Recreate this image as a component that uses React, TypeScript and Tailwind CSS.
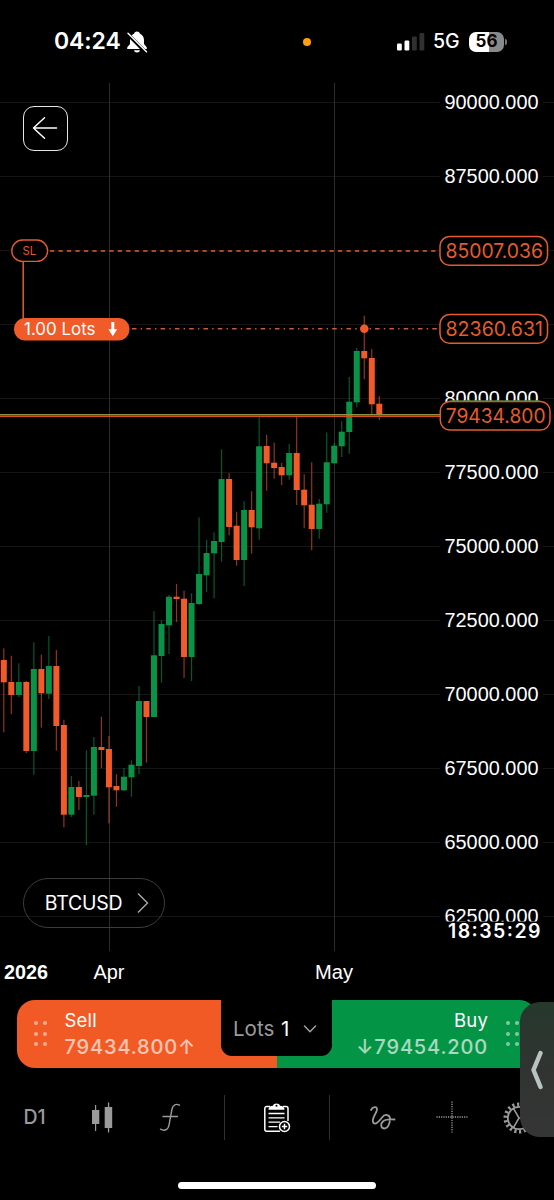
import React from 'react';

type Candle = [dir: 'up' | 'down', high: number, top: number, bottom: number, low: number];

const UP = '#0a9347';
const DOWN = '#f15a29';
const ACCENT = '#e25c2e';

const candles: Candle[] = [
  ['down', 648.3, 660, 682.3, 732.3],
  ['down', 655.7, 682, 695, 714.3],
  ['up', 663.3, 682, 695, 697],
  ['down', 681, 682, 751, 753],
  ['up', 642.3, 669, 751, 774.7],
  ['down', 654.7, 669, 693.3, 727.7],
  ['up', 636, 666, 693.7, 699],
  ['down', 650, 666, 726, 750.7],
  ['down', 719.7, 725, 814.7, 827.3],
  ['up', 776, 787, 814.7, 817],
  ['down', 781, 787, 797, 810],
  ['up', 750.3, 795, 797, 845],
  ['up', 737, 747, 795.7, 814.7],
  ['down', 716.7, 747, 750, 768],
  ['down', 736, 749, 787.3, 823.3],
  ['down', 774.3, 786, 790.3, 806.7],
  ['up', 768, 776.7, 790.3, 791],
  ['up', 760.3, 764.7, 777.3, 796.7],
  ['up', 686, 701, 766, 774.3],
  ['down', 701, 701, 717, 762.7],
  ['up', 611.3, 655.3, 717, 717],
  ['up', 620.3, 624, 656, 682.7],
  ['up', 595, 596.7, 625.3, 654],
  ['down', 584, 596.7, 599, 622],
  ['down', 590.7, 598.7, 657, 678],
  ['up', 593.3, 603, 657, 681],
  ['up', 517.3, 574, 604, 605],
  ['up', 540, 553, 575.3, 592],
  ['up', 532.3, 541, 553.3, 598.3],
  ['up', 449.3, 479, 542, 561.7],
  ['down', 473.3, 479, 527, 535.3],
  ['down', 511.7, 525.7, 560, 565.7],
  ['up', 501.3, 510, 560, 586],
  ['down', 491.3, 510, 527.3, 553.7],
  ['up', 416, 446.3, 528.3, 539.7],
  ['down', 434.7, 446, 463.3, 490.7],
  ['down', 442.7, 462.7, 468, 478.7],
  ['down', 463, 467, 475.3, 485],
  ['up', 444, 453, 475.3, 479.7],
  ['down', 416, 453, 490, 505],
  ['down', 474.3, 489.7, 505.3, 528.3],
  ['down', 462.3, 504.7, 529, 550.3],
  ['up', 499, 503.7, 529, 538.7],
  ['up', 432.3, 462.3, 504.3, 512.7],
  ['up', 442.7, 445.7, 463.3, 463.3],
  ['up', 421.3, 431.7, 446.3, 457],
  ['up', 377, 401.7, 432, 453.7],
  ['up', 348, 351, 402.3, 407.3],
  ['down', 315.7, 351, 358.3, 379.3],
  ['down', 349, 358, 404.3, 415],
  ['down', 396, 403.7, 414.3, 420],
];

const prices = [90000, 87500, 85000, 82500, 80000, 77500, 75000, 72500, 70000, 67500, 65000, 62500];

// these two levels sit under the order price tags
const hiddenPrices = [85000, 82500];

const PriceTag: React.FC<{ x: number; y: number; width: number; label: string }> = ({ x, y, width, label }) => (
  <g>
    <rect x={x} y={y} width={width} height={28.6} rx={9.5} fill="#000" stroke={ACCENT} strokeWidth={1.5} />
    <text x={x + 5.5} y={y + 21.4} textLength={width - 10} lengthAdjust="spacingAndGlyphs" fontSize={20} fill={ACCENT} className="font-['Inter',sans-serif]">
      {label}
    </text>
  </g>
);

const Chart: React.FC = () => (
  <svg width="554" height="917" viewBox="0 83 554 917" className="block">
    {prices.map((price, i) => {
      const y = 102.5 + i * 74;
      return <path key={price} d={`M0 ${y}H440M543 ${y}H554`} stroke="#151515" />;
    })}
    <path d="M109.5 83V951M334.5 83V951" stroke="#2c2c2c" />

    {candles.map(([dir, high, top, bottom, low], i) => {
      const x = 3.8 + i * 7.51;
      const color = dir === 'up' ? UP : DOWN;
      return (
        <g key={i} fill={color}>
          <rect x={x - 0.6} y={high} width={1.2} height={low - high} opacity={0.6} />
          <rect x={x - 3} y={top} width={6} height={bottom - top} />
        </g>
      );
    })}

    {prices.map((price, i) =>
      hiddenPrices.includes(price) ? null : (
        <text key={price} x={444.5} y={109 + i * 74} textLength={94} lengthAdjust="spacingAndGlyphs" fontSize={19.6} fill="#fff" className="font-['Liberation_Sans',sans-serif]">
          {price}.000
        </text>
      )
    )}

    {/* stop loss and open position */}
    <path d="M50 251H438" stroke={ACCENT} strokeWidth={1.6} strokeDasharray="4.3 4.17" />
    <path d="M132 328.8H438" stroke="#d0583a" strokeWidth={1.5} strokeDasharray="4.5 4.2 1.4 4.2" />
    <path d="M23.2 262V319" stroke={ACCENT} strokeWidth={1.5} />
    <rect x={11.8} y={240} width={35.8} height={21.4} rx={10.7} fill="#000" stroke={ACCENT} strokeWidth={1.4} />
    <text x={22.5} y={255} textLength={13.5} lengthAdjust="spacingAndGlyphs" fontSize={11.5} fill={ACCENT} className="font-['Inter',sans-serif]">SL</text>
    <rect x={14} y={318} width={115.5} height={22.5} rx={11.2} fill={DOWN} />
    <text x={24} y={335.2} textLength={71.5} lengthAdjust="spacingAndGlyphs" fontSize={16.8} fill="#fff" className="font-['Inter',sans-serif]">1.00 Lots</text>
    <path d="M111.3 322h3v7.2h2.9l-4.4 7-4.4-7h2.9z" fill="#fff" />
    <circle cx={364.3} cy={328.8} r={4.3} fill={DOWN} />

    {/* ask and bid */}
    <path d="M0 414.8H440" stroke="#8d9148" strokeWidth={1.6} />
    <path d="M0 416.3H440" stroke="#d6511f" strokeWidth={1.3} />

    <PriceTag x={440} y={236.6} width={107.5} label="85007.036" />
    <PriceTag x={440} y={314.6} width={107.5} label="82360.631" />
    <PriceTag x={440.3} y={401.5} width={109.7} label="79434.800" />
    <path d="M450 400.8H540" stroke="#4c7a36" />

    <rect x={444} y={921.5} width={100} height={20} fill="#000" />
    <text x={448} y={938} textLength={92.5} lengthAdjust="spacing" fontSize={19.5} fontWeight={600} fill="#fff" className="font-['Inter',sans-serif]">18:35:29</text>

    <g fontSize={20} fill="#fff" className="font-['Liberation_Sans',sans-serif]">
      <text x={4} y={979} textLength={44} lengthAdjust="spacingAndGlyphs" fontWeight={700}>2026</text>
      <text x={93.5} y={979} textLength={31} lengthAdjust="spacingAndGlyphs">Apr</text>
      <text x={315} y={979} textLength={38} lengthAdjust="spacingAndGlyphs">May</text>
    </g>
  </svg>
);

const StatusBar: React.FC = () => (
  <div className="flex h-[83px] items-center">
    <div className="ml-[54px] w-[70px] text-[23px] font-semibold leading-none tracking-[-0.1px]">04:24</div>
    <svg width="24" height="24" viewBox="0 0 24 24" className="ml-[1px]">
      <path d="M12 1.500c-1.600 0-2.800 1-3 2.300C6.500 4.800 5 7.500 5 10v3.500c0 1.500-3 3.200-3 4.700 0 .6.4.8 1 .8h18c.6 0 1-.2 1-.8 0-1.500-3-3.200-3-4.700V10c0-2.500-1.500-5.200-4-6.200-.2-1.300-1.400-2.300-3-2.300z" fill="#fff" />
      <path d="M9 20.300h6c-.3 1.400-1.500 2.200-3 2.200s-2.700-.8-3-2.200z" fill="#fff" />
      <path d="M2.400 3.800L21 22.600" stroke="#000" strokeWidth="3.600" />
      <path d="M3 3.200L21.500 21.700" stroke="#fff" strokeWidth="1.500" strokeLinecap="round" />
    </svg>
    <div className="ml-[153.500px] size-2 rounded-full bg-[#ff9f0a]" />
    <svg width="28" height="19" viewBox="0 0 28 19" className="ml-[86.500px]">
      <rect x="0" y="11.500" width="4.800" height="7" rx="1.300" fill="#fff" />
      <rect x="7.500" y="8.500" width="4.800" height="10" rx="1.300" fill="#fff" />
      <rect x="15" y="4.500" width="4.800" height="14" rx="1.300" fill="#303030" />
      <rect x="22.500" y="1" width="4.800" height="17.500" rx="1.300" fill="#303030" />
    </svg>
    <div className="ml-[8px] w-[28px] text-[19.500px] font-medium leading-none">5G</div>
    <div className="ml-[8px] flex h-5 w-[35px] items-center justify-center rounded-[7px] bg-linear-to-r from-white from-57% to-[#8a8a8a] to-57% text-[17px] font-bold leading-none text-black">
      56
    </div>
    <div className="ml-[1px] h-[6px] w-[2px] rounded-r-full bg-[#777]" />
  </div>
);

const Grip: React.FC<{ className: string }> = ({ className }) => (
  <div className={`grid grid-cols-2 gap-x-[4.500px] gap-y-[6.800px] ${className}`}>
    {[0, 1, 2, 3, 4, 5].map((dot) => (
      <span key={dot} className="size-[4px] rounded-full bg-white/50" />
    ))}
  </div>
);

const TradeBar: React.FC = () => (
  <div className="relative ml-[17px] flex h-[67.500px] w-[520px] overflow-hidden rounded-[18px]">
    <div className="flex w-[260px] bg-[#f15a24]">
      <Grip className="ml-[17px] mt-[20.800px] self-start" />
      <div className="ml-[18px] pt-[8px]">
        <div className="text-[18.500px] leading-[24px] tracking-[0.200px]">Sell</div>
        <div className="whitespace-nowrap text-[20px] font-medium leading-[31px] tracking-[0.850px] text-white/65">79434.800↑</div>
      </div>
    </div>
    <div className="flex w-[260px] justify-end bg-[#049446]">
      <div className="pt-[8px] text-right">
        <div className="text-[18.500px] leading-[24px] tracking-[0.200px]">Buy</div>
        <div className="whitespace-nowrap text-[20px] font-medium leading-[31px] tracking-[0.850px] text-white/65">↓79454.200</div>
      </div>
      <Grip className="ml-[18px] mr-[18.500px] mt-[20.800px] self-start" />
    </div>
    <div className="absolute left-[204px] top-0 flex h-[56px] w-[111px] items-center rounded-b-[11px] bg-black pl-[12px] pt-[2px] text-[20.500px]">
      <span className="w-[43px] text-[#9b9b9b]">Lots</span>
      <span className="ml-[5px] w-[11px]">1</span>
      <svg width="14" height="8" viewBox="0 0 14 8" className="ml-[11px]" fill="none" stroke="#a0a0a0" strokeWidth="1.500">
        <path d="M1.500 1L7 6.700 12.500 1" strokeLinecap="round" strokeLinejoin="round" />
      </svg>
    </div>
  </div>
);

const Divider: React.FC = () => <div className="h-[45px] w-px bg-[#303030]" />;

const Toolbar: React.FC = () => (
  <div className="flex h-[100px] items-center text-[#9a9a9a]">
    <div className="flex w-[69px] justify-center pt-[1px] text-[19.500px] font-medium">D1</div>
    <div className="flex w-[67px] justify-center">
      <svg width="22" height="32" viewBox="0 0 22 32" className="-mt-[2px]" fill="currentColor">
        <path d="M0 9h7.300v14H0zM3 4h1.200v26H3zM12.700 6h7.500v21h-7.500zM15.900 1.500h1.300v30h-1.300z" />
      </svg>
    </div>
    <div className="flex w-[68px] justify-center">
      <svg width="22" height="32" viewBox="0 0 22 32" className="-mt-[2px]" fill="none" stroke="currentColor" strokeWidth="1.400" strokeLinecap="round">
        <path d="M20.500 4.200C17 2.500 14 3.500 13 8L10 24c-.8 5-4.500 6.300-8.500 4.200M4 15.500H18.500" />
      </svg>
    </div>
    <div className="ml-[20px] flex items-center">
      <Divider />
      <div className="flex w-[104px] justify-center">
        <svg width="28" height="32" viewBox="0 0 28 32" fill="none" stroke="#fff" strokeWidth="1.500">
          <path d="M17 29.300H3.800a2 2 0 0 1-2-2V6.500a2 2 0 0 1 2-2H7M20 4.500h3a2 2 0 0 1 2 2V19" />
          <path d="M5.500 7.800c0-2.800 1.700-3.800 4.500-4 .5-3.200 6.500-3.200 7 0 2.800.2 4.500 1.200 4.500 4z" fill="#fff" stroke="none" />
          <circle cx="13.500" cy="3.700" r="1" fill="#000" stroke="none" />
          <path d="M5.500 11.500h16M5.500 15.800h16M5.500 20.200h11.500M5.500 24.600h9" strokeWidth="1.300" />
          <circle cx="21.500" cy="24.500" r="5" />
          <path d="M21.500 21.800v5.400M18.800 24.500h5.400" />
        </svg>
      </div>
      <Divider />
    </div>
    <div className="ml-[19px] flex w-[68px] justify-center">
      <svg width="28" height="28" viewBox="0 0 28 28" fill="none" stroke="currentColor" strokeWidth="1.800" strokeLinecap="round" strokeLinejoin="round">
        <path d="M2 6C3.500 3 8 1.500 8 5.500 8 8.500 2.500 14.500 4 18c2 4 6-.5 9-4.500 3-4.200 8-2.800 8 1.500 0 5-2.500 9.500-5.500 9.500-4 0-4.500-5-1-7.500 3-2 6-1.500 11-1.500" />
      </svg>
    </div>
    <div className="flex w-[70px] justify-center">
      <svg width="32" height="32" viewBox="0 0 32 32" className="-mt-[2px]" stroke="currentColor" strokeWidth="1.300" strokeDasharray="1.200 1.100">
        <path d="M16 .5v31M.5 16h31" />
      </svg>
    </div>
    <div className="flex w-[64px] justify-center">
      <svg width="32" height="32" viewBox="0 0 32 32" fill="none" stroke="currentColor">
        <circle cx="16" cy="16" r="11.200" strokeWidth="1.800" />
        <circle cx="16" cy="16" r="13.600" strokeWidth="3.800" strokeDasharray="2.200 2.546" />
        <path d="M16 16L10.500 6.500M16 16l-5.500 9.500M16 16h11" strokeWidth="1.500" />
      </svg>
    </div>
  </div>
);

const App: React.FC = () => (
  <div className="relative h-[1200px] w-[554px] overflow-hidden bg-black font-['Inter',sans-serif] text-white">
    <StatusBar />
    <div className="relative">
      <Chart />
      <button className="absolute left-[22.500px] top-[22.500px] flex h-[45px] w-[45px] items-center justify-center rounded-[11px] border-[1.500px] border-white/90">
        <svg width="26" height="24" viewBox="0 0 26 24" className="-mt-px" fill="none" stroke="#fff" strokeWidth="1.500" strokeLinecap="round" strokeLinejoin="round">
          <path d="M12.500 1.800L1.500 12l11 10.200M1.500 12H24.500" />
        </svg>
      </button>
      <button className="absolute left-[22.500px] top-[795px] flex h-[50px] w-[142px] items-center rounded-full border border-[#3d3d3d] pl-[20px]">
        <span className="w-[80px] whitespace-nowrap pt-[2px] text-[19.500px] font-normal tracking-[-0.250px]">BTCUSD</span>
        <svg width="12" height="22" viewBox="0 0 12 22" className="ml-[13px]" fill="none" stroke="#aaa" strokeWidth="1.400">
          <path d="M1 1.500L10.500 11 1 20.500" />
        </svg>
      </button>
    </div>
    <TradeBar />
    <Toolbar />
    <div className="ml-[178px] mt-[14px] h-[7px] w-[198px] rounded-full bg-white" />

    {/* side panel handle */}
    <div className="absolute left-[520px] top-[1002px] flex h-[135px] w-[34px] items-center rounded-l-[20px] bg-linear-to-b from-[#26382c] via-[#303431] to-[#353535] pl-[10px]">
      <svg width="14" height="40" viewBox="0 0 14 40" fill="none" stroke="#b9c4c2" strokeWidth="4.500" strokeLinecap="round" strokeLinejoin="round">
        <path d="M10.500 3L3.500 20l7 17" />
      </svg>
    </div>
  </div>
);

export default App;
